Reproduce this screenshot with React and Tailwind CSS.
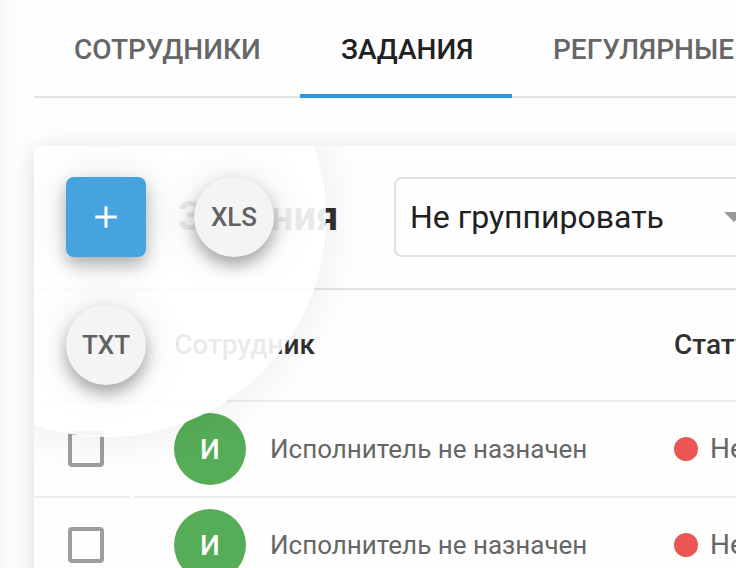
const tabs = [
  { label: "СОТРУДНИКИ", width: "w-[266px]", pad: "pl-10" },
  { label: "ЗАДАНИЯ", width: "w-[212px]", pad: "pl-[41px]", active: true },
  { label: "РЕГУЛЯРНЫЕ", width: "w-[270px]", pad: "pl-[41px]" },
];

const rows = [
  { id: 1, initial: "И", name: "Исполнитель не назначен", status: "Не начато" },
  { id: 2, initial: "И", name: "Исполнитель не назначен", status: "Не начато" },
];

function Tabs() {
  return (
    <nav className="ml-[34px] flex h-[98px] shrink-0 shadow-[inset_0_-2px_0_#e3e3e3]">
      {tabs.map((tab) => (
        <button
          key={tab.label}
          className={`flex shrink-0 items-center border-b-4 text-[28px] font-medium whitespace-nowrap ${tab.pad} ${tab.width} ${
            tab.active ? "border-[#2998dc] text-[#212121]" : "border-transparent text-[#666666]"
          }`}
        >
          <span className="pt-[5px]">{tab.label}</span>
        </button>
      ))}
    </nav>
  );
}

function ActionMenu() {
  return (
    <div className="absolute -top-[149px] -left-[148px] size-[440px] rounded-full bg-white/90 shadow-[0_0_48px_rgba(0,0,0,0.08)]">
      <div className="grid grid-cols-[80px_80px] gap-12 pt-[180px] pl-[180px]">
        <button className="flex size-20 items-center justify-center rounded-lg bg-[#45a3df] shadow-[0_8px_16px_rgba(0,0,0,0.28),0_0_48px_rgba(0,0,0,0.1)]">
          <svg width="22" height="22" viewBox="0 0 22 22" stroke="#fff" strokeWidth="3">
            <path d="M11 0.3v21.4M0.3 11h21.4" />
          </svg>
        </button>
        <RoundButton label="XLS" />
        <RoundButton label="TXT" />
      </div>
    </div>
  );
}

function RoundButton({ label }) {
  return (
    <button className="flex size-20 items-center justify-center rounded-full bg-[#f4f4f4] text-[26px] font-medium text-[#616161] shadow-[0_8px_16px_rgba(0,0,0,0.33),0_0_48px_rgba(0,0,0,0.1)]">
      {label}
    </button>
  );
}

function CardHeader() {
  return (
    <header className="flex h-36 items-center border-b-2 border-[#e3e3e3] pl-36">
      <h1 className="w-[216px] shrink-0 text-[40px] font-bold text-[#303030]">Задания</h1>
      <div className="flex h-20 w-[400px] shrink-0 items-center rounded-lg border-2 border-[#e0e0e0] pl-[14px] text-[32px] text-[#212121]">
        <span className="w-[314px] whitespace-nowrap">Не группировать</span>
        <svg width="20" height="10" viewBox="0 0 20 10" fill="#999">
          <path d="M0 0h20L10 10z" />
        </svg>
      </div>
    </header>
  );
}

function TaskRow({ row }) {
  return (
    <div className="flex h-24 items-center gap-1 text-[26px] text-[#666666]">
      <div className="flex h-full w-24 shrink-0 items-center border-b-2 border-[#ededed] pl-[34px]">
        <div className="size-9 rounded-[4px] border-4 border-[#9e9e9e]" />
      </div>
      <div className="flex h-full w-[640px] shrink-0 items-center border-b-2 border-[#ededed] pl-10">
        <div className="flex size-[72px] shrink-0 items-center justify-center rounded-full bg-[#56ad57] pt-[2px] text-[28px] font-medium text-white">
          {row.initial}
        </div>
        <span className="w-[428px] shrink-0 pl-6 whitespace-nowrap">{row.name}</span>
        <div className="size-6 shrink-0 rounded-full bg-[#eb5554]" />
        <span className="pl-3 text-[28px] whitespace-nowrap">{row.status}</span>
      </div>
    </div>
  );
}

export default function App() {
  return (
    <div className="flex h-[568px] w-[736px] flex-col overflow-hidden bg-[#fefefe] font-[Roboto,sans-serif] antialiased shadow-[inset_24px_0_24px_-24px_rgba(0,0,0,0.06)]">
      <Tabs />
      <main className="relative mt-12 ml-[34px] h-[600px] w-[800px] shrink-0 overflow-hidden rounded-lg bg-[#fefefe] shadow-[0_4px_24px_rgba(0,0,0,0.14)]">
        <CardHeader />
        <div className="flex h-28 items-center border-b-2 border-[#ededed] pl-[140px] text-[28px] font-medium text-[#303030]">
          <span className="w-[500px] shrink-0">Сотрудник</span>
          <span>Статус</span>
        </div>
        {rows.map((row) => (
          <TaskRow key={row.id} row={row} />
        ))}
        <ActionMenu />
      </main>
    </div>
  );
}
